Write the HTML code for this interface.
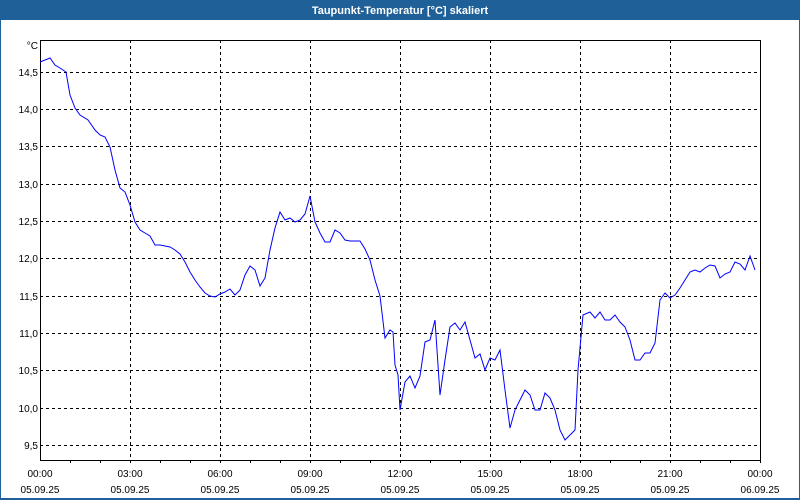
<!DOCTYPE html>
<html><head><meta charset="utf-8"><style>
html,body{margin:0;padding:0;width:800px;height:500px;overflow:hidden;background:#fff;font-family:"Liberation Sans",sans-serif}
</style></head><body>
<svg width="800" height="500" xmlns="http://www.w3.org/2000/svg" style="display:block">
<rect x="0" y="0" width="800" height="500" fill="#fff"/>
<rect x="0" y="0" width="800" height="20" fill="#1f6098"/>
<rect x="0" y="0" width="1" height="500" fill="#1f6098"/>
<rect x="799" y="0" width="1" height="500" fill="#1f6098"/>
<rect x="0" y="498" width="800" height="2" fill="#1f6098"/>
<text x="400" y="14" font-size="11" font-weight="bold" fill="#fff" text-anchor="middle">Taupunkt-Temperatur [°C] skaliert</text>
<g stroke="#000" stroke-width="1" stroke-dasharray="3,3" shape-rendering="crispEdges">
<line x1="40" x2="760" y1="72.5" y2="72.5"/><line x1="40" x2="760" y1="109.5" y2="109.5"/><line x1="40" x2="760" y1="146.5" y2="146.5"/><line x1="40" x2="760" y1="184.5" y2="184.5"/><line x1="40" x2="760" y1="221.5" y2="221.5"/><line x1="40" x2="760" y1="258.5" y2="258.5"/><line x1="40" x2="760" y1="296.5" y2="296.5"/><line x1="40" x2="760" y1="333.5" y2="333.5"/><line x1="40" x2="760" y1="370.5" y2="370.5"/><line x1="40" x2="760" y1="408.5" y2="408.5"/><line x1="40" x2="760" y1="445.5" y2="445.5"/>
<line x1="130.5" x2="130.5" y1="40" y2="460"/><line x1="220.5" x2="220.5" y1="40" y2="460"/><line x1="310.5" x2="310.5" y1="40" y2="460"/><line x1="400.5" x2="400.5" y1="40" y2="460"/><line x1="490.5" x2="490.5" y1="40" y2="460"/><line x1="580.5" x2="580.5" y1="40" y2="460"/><line x1="670.5" x2="670.5" y1="40" y2="460"/>
</g>
<g stroke="#000" stroke-width="1" shape-rendering="crispEdges" fill="none">
<rect x="40.5" y="40.5" width="720" height="420"/>
<path d="M70.5 460v3M100.5 460v3M130.5 460v3M160.5 460v3M190.5 460v3M220.5 460v3M250.5 460v3M280.5 460v3M310.5 460v3M340.5 460v3M370.5 460v3M400.5 460v3M430.5 460v3M460.5 460v3M490.5 460v3M520.5 460v3M550.5 460v3M580.5 460v3M610.5 460v3M640.5 460v3M670.5 460v3M700.5 460v3M730.5 460v3M760.5 460v3"/>
</g>
<polyline fill="none" stroke="#0000ff" stroke-width="1" points="40,62 50,58 55,65 60,68 66,72 70,95 75,108 80,115 88,120 95,130 100,135 105,137 110,147 115,170 120,188 125,192 130,205 135,222 140,230 145,233 150,236 155,245 160,245 170,247 175,250 180,254 185,262 190,272 195,280 200,287 205,293 210,296 215,297 220,294 225,292 230,289 235,295 240,290 245,275 250,266 255,270 260,286 265,278 270,250 275,228 280,212 285,220 290,218 295,222 300,220 305,214 310,196 315,222 320,233 325,242 330,242 335,230 340,233 345,240 350,241 355,241 360,241 365,249 370,260 375,280 380,296 385,338 390,330 393,332 395,365 398,375 400,410 405,382 410,376 415,388 420,376 425,342 430,340 435,320 440,395 445,360 450,327 455,323 460,330 465,322 470,340 475,358 480,354 485,370 490,358 495,360 500,350 505,390 510,428 515,410 520,400 525,390 530,395 535,410 540,410 545,393 550,398 555,410 560,430 565,440 570,435 575,430 578,370 583,315 590,312 595,318 600,312 605,320 610,320 615,315 620,322 625,327 630,340 635,360 640,360 645,353 650,353 655,343 660,300 665,293 670,298 675,295 680,288 685,280 690,272 695,270 700,272 705,268 710,265 715,266 720,278 725,274 730,272 735,262 740,264 745,270 750,256 755,270"/>
<g font-size="10" fill="#000" text-anchor="end">
<text x="38" y="49">°C</text>
<text x="38" y="76">14,5</text><text x="38" y="113">14,0</text><text x="38" y="150">13,5</text><text x="38" y="188">13,0</text><text x="38" y="225">12,5</text><text x="38" y="262">12,0</text><text x="38" y="300">11,5</text><text x="38" y="337">11,0</text><text x="38" y="374">10,5</text><text x="38" y="412">10,0</text><text x="38" y="449">9,5</text>
</g>
<g font-size="10" fill="#000" text-anchor="middle">
<text x="40" y="477">00:00</text><text x="130" y="477">03:00</text><text x="220" y="477">06:00</text><text x="310" y="477">09:00</text><text x="400" y="477">12:00</text><text x="490" y="477">15:00</text><text x="580" y="477">18:00</text><text x="670" y="477">21:00</text><text x="760" y="477">00:00</text>
<text x="40" y="493">05.09.25</text><text x="130" y="493">05.09.25</text><text x="220" y="493">05.09.25</text><text x="310" y="493">05.09.25</text><text x="400" y="493">05.09.25</text><text x="490" y="493">05.09.25</text><text x="580" y="493">05.09.25</text><text x="670" y="493">05.09.25</text><text x="760" y="493">06.09.25</text>
</g>
</svg>
</body></html>
